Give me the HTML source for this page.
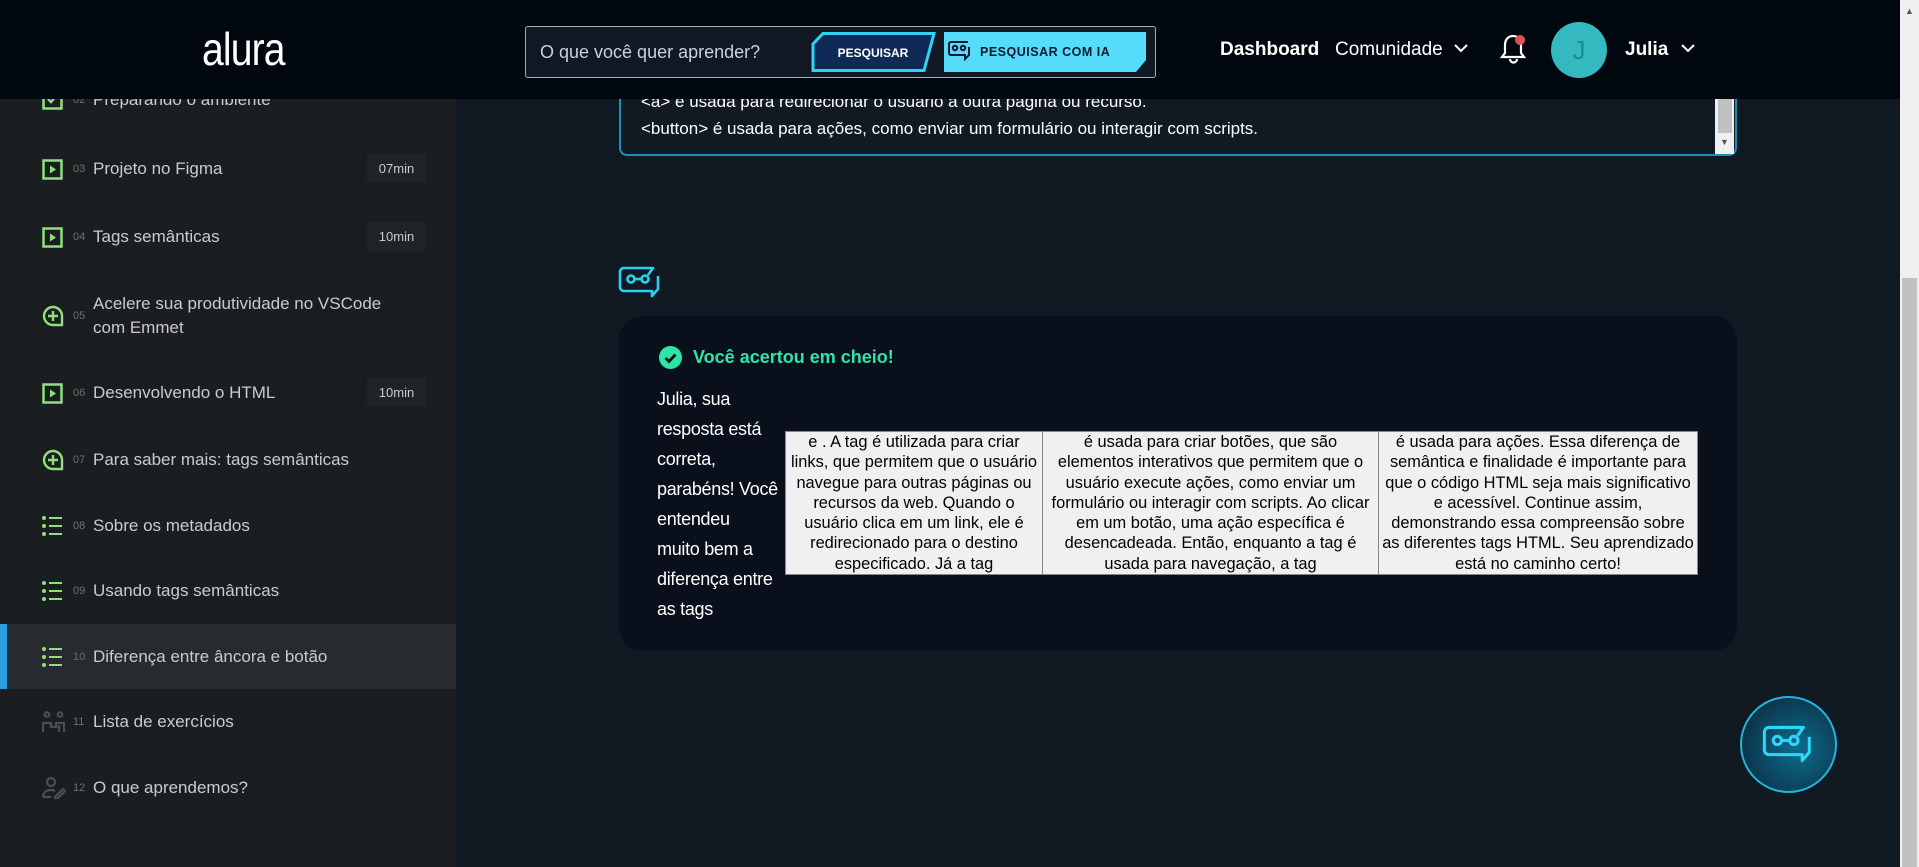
<!DOCTYPE html>
<html><head><meta charset="utf-8"><style>
*{margin:0;padding:0;box-sizing:border-box}
body{width:1919px;height:867px;overflow:hidden;background:#111923;font-family:"Liberation Sans",sans-serif;position:relative;color:#fff}
.abs{position:absolute}
#side{left:0;top:0;width:456px;height:867px;background:#1b1e21}
.it{position:absolute;left:0;width:456px;height:40px;display:flex;align-items:center;color:#c9cbcd;font-size:17px}
.it svg{position:absolute;left:42px}
.it .n{position:absolute;left:73px;font-size:11px;color:#6b7075}
.it .t{position:absolute;left:93px;line-height:24px}
.dur{position:absolute;left:367px;width:59px;height:29px;background:#202427;color:#c9cbcd;font-size:13px;line-height:29px;text-align:center}
#hdr{left:0;top:0;width:1900px;height:99px;background:#01070e}
#sb{left:1900px;top:0;width:19px;height:867px;background:#f0f0f0}
td{background:#f0f0f0;color:#000;border:1px solid #888;text-align:center;font-size:16.4px;line-height:20.3px;padding:0 1px;vertical-align:top}
</style></head><body>
<div id="side" class="abs">
 <div class="it" style="top:80px"><svg width="21" height="22" viewBox="0 0 21 22"><rect x="1.5" y="1.5" width="18" height="18" fill="none" stroke="#8fe07a" stroke-width="2.5"/><path d="M6 10l3 3 5-6" stroke="#8fe07a" stroke-width="2.5" fill="none"/></svg><span class="n">02</span><span class="t">Preparando o ambiente</span></div>
 <div class="it" style="top:149px"><svg width="21" height="21" viewBox="0 0 21 21"><rect x="1.5" y="1.5" width="18" height="18" fill="none" stroke="#8fe07a" stroke-width="2.5"/><path d="M8 6.5v8l6-4z" fill="#8fe07a"/></svg><span class="n">03</span><span class="t">Projeto no Figma</span><span class="dur" style="top:5px">07min</span></div>
 <div class="it" style="top:217px"><svg width="21" height="21" viewBox="0 0 21 21"><rect x="1.5" y="1.5" width="18" height="18" fill="none" stroke="#8fe07a" stroke-width="2.5"/><path d="M8 6.5v8l6-4z" fill="#8fe07a"/></svg><span class="n">04</span><span class="t">Tags semânticas</span><span class="dur" style="top:5px">10min</span></div>
 <div class="it" style="top:296px"><svg width="22" height="22" viewBox="0 0 22 22"><path d="M11 2a9 9 0 1 0 0 18h9v-9a9 9 0 0 0-9-9z" fill="none" stroke="#8fe07a" stroke-width="2.4"/><path d="M11 6v10M6 11h10" stroke="#8fe07a" stroke-width="2.4"/></svg><span class="n">05</span><span class="t">Acelere sua produtividade no VSCode<br>com Emmet</span></div>
 <div class="it" style="top:373px"><svg width="21" height="21" viewBox="0 0 21 21"><rect x="1.5" y="1.5" width="18" height="18" fill="none" stroke="#8fe07a" stroke-width="2.5"/><path d="M8 6.5v8l6-4z" fill="#8fe07a"/></svg><span class="n">06</span><span class="t">Desenvolvendo o HTML</span><span class="dur" style="top:5px">10min</span></div>
 <div class="it" style="top:440px"><svg width="22" height="22" viewBox="0 0 22 22"><path d="M11 2a9 9 0 1 0 0 18h9v-9a9 9 0 0 0-9-9z" fill="none" stroke="#8fe07a" stroke-width="2.4"/><path d="M11 6v10M6 11h10" stroke="#8fe07a" stroke-width="2.4"/></svg><span class="n">07</span><span class="t">Para saber mais: tags semânticas</span></div>
 <div class="it" style="top:506px"><svg width="21" height="20" viewBox="0 0 21 20"><g fill="#8fe07a"><circle cx="2" cy="2" r="2"/><circle cx="2" cy="10" r="2"/><circle cx="2" cy="18" r="2"/><rect x="7" y="1" width="13" height="2"/><rect x="7" y="9" width="13" height="2"/><rect x="7" y="17" width="13" height="2"/></g></svg><span class="n">08</span><span class="t">Sobre os metadados</span></div>
 <div class="it" style="top:571px"><svg width="21" height="20" viewBox="0 0 21 20"><g fill="#8fe07a"><circle cx="2" cy="2" r="2"/><circle cx="2" cy="10" r="2"/><circle cx="2" cy="18" r="2"/><rect x="7" y="1" width="13" height="2"/><rect x="7" y="9" width="13" height="2"/><rect x="7" y="17" width="13" height="2"/></g></svg><span class="n">09</span><span class="t">Usando tags semânticas</span></div>
 <div class="abs" style="left:0;top:624px;width:456px;height:65px;background:#272a2e"></div>
 <div class="abs" style="left:0;top:624px;width:7px;height:65px;background:#2aa0e0"></div>
 <div class="it" style="top:637px"><svg width="21" height="20" viewBox="0 0 21 20"><g fill="#8fe07a"><circle cx="2" cy="2" r="2"/><circle cx="2" cy="10" r="2"/><circle cx="2" cy="18" r="2"/><rect x="7" y="1" width="13" height="2"/><rect x="7" y="9" width="13" height="2"/><rect x="7" y="17" width="13" height="2"/></g></svg><span class="n">10</span><span class="t">Diferença entre âncora e botão</span></div>
 <div class="it" style="top:702px"><svg width="24" height="22" viewBox="0 0 24 22"><g fill="none" stroke="#4a4f55" stroke-width="2.2"><circle cx="5" cy="3.5" r="2.3"/><circle cx="18" cy="3.5" r="2.3"/><path d="M1 21v-9h8v4h5v-4h8v9M17 14v7"/></g></svg><span class="n">11</span><span class="t">Lista de exercícios</span></div>
 <div class="it" style="top:768px"><svg width="24" height="22" viewBox="0 0 24 22"><g fill="none" stroke="#4a4f55" stroke-width="2.2"><circle cx="9" cy="5" r="4"/><path d="M1 20c0-5 4-7 8-7 2 0 3 .4 4 1M1 20h8M13 20l8-8 2 2-8 8h-2z"/></g></svg><span class="n">12</span><span class="t">O que aprendemos?</span></div>
</div>

<div class="abs" style="left:619px;top:60px;width:1118px;height:96px;border:2px solid #1f8fb5;border-top:none;border-radius:0 0 8px 8px;background:#111923"></div>
<div class="abs" style="left:641px;top:88px;font-size:17px;line-height:27px;color:#fff">&lt;a&gt; é usada para redirecionar o usuário a outra página ou recurso.<br>&lt;button&gt; é usada para ações, como enviar um formulário ou interagir com scripts.</div>
<div class="abs" style="left:1715px;top:99px;width:19px;height:55px;background:#f0f0f0"><div style="margin:0 auto;width:14px;height:34px;background:#c1c1c1"></div><div style="color:#555;font-size:9px;text-align:center;margin-top:4px">▼</div></div>

<svg class="abs" style="left:618px;top:266px" width="44" height="32" viewBox="0 0 44 32"><g fill="none" stroke="#2bd0f0" stroke-width="2.6" stroke-linejoin="round"><path d="M5 2h30l-5 7v0M40 10v13l-6 7v-5H6a4 4 0 0 1-4-4V6a4 4 0 0 1 4-4"/><circle cx="13" cy="13" r="3.5"/><circle cx="27" cy="13" r="3.5"/><path d="M16.5 13h7"/></g></svg>

<div class="abs" style="left:619px;top:316px;width:1118px;height:335px;background:#09101b;border-radius:24px"></div>
<svg class="abs" style="left:659px;top:346px" width="23" height="23" viewBox="0 0 23 23"><circle cx="11.5" cy="11.5" r="11.5" fill="#2de6a5"/><path d="M6.5 12l3.5 3.5 6.5-7" stroke="#09101b" stroke-width="2.8" fill="none"/></svg>
<div class="abs" style="left:693px;top:347px;font-size:18px;font-weight:bold;color:#2de6a5">Você acertou em cheio!</div>
<div class="abs" style="left:657px;top:384px;white-space:nowrap;font-size:18px;letter-spacing:-.3px;line-height:30px;color:#fff">Julia, sua<br>resposta está<br>correta,<br>parabéns! Você<br>entendeu<br>muito bem a<br>diferença entre<br>as tags</div>
<table class="abs" style="left:785px;top:431px;width:913px;height:143px;border-collapse:collapse">
<tr><td style="width:257px;padding:0 4px">e . A tag é utilizada para criar links, que permitem que o usuário navegue para outras páginas ou recursos da web. Quando o usuário clica em um link, ele é redirecionado para o destino especificado. Já a tag</td>
<td style="width:336px">é usada para criar botões, que são elementos interativos que permitem que o usuário execute ações, como enviar um formulário ou interagir com scripts. Ao clicar em um botão, uma ação específica é desencadeada. Então, enquanto a tag é usada para navegação, a tag</td>
<td style="padding:0 3px">é usada para ações. Essa diferença de semântica e finalidade é importante para que o código HTML seja mais significativo e acessível. Continue assim, demonstrando essa compreensão sobre as diferentes tags HTML. Seu aprendizado está no caminho certo!</td></tr></table>

<div class="abs" style="left:1740px;top:696px;width:97px;height:97px;border-radius:50%;border:2px solid #22b5d8;background:radial-gradient(circle at 60% 55%,#0d6b8c,#0b3449 75%)"></div>
<svg class="abs" style="left:1762px;top:724px" width="52" height="40" viewBox="0 0 44 32"><g fill="none" stroke="#2bd8f8" stroke-width="2.6" stroke-linejoin="round"><path d="M5 2h30l-5 7M40 10v13l-6 7v-5H6a4 4 0 0 1-4-4V6a4 4 0 0 1 4-4"/><circle cx="13" cy="13" r="3.5"/><circle cx="27" cy="13" r="3.5"/><path d="M16.5 13h7"/></g></svg>

<div id="hdr" class="abs">
 <div class="abs" style="left:202px;top:22px;font-size:46px;color:#fff;letter-spacing:-1px;transform:scaleX(.85);transform-origin:left">alura</div>
 <div class="abs" style="left:525px;top:26px;width:631px;height:52px;border:1.5px solid #9fb0bf;border-radius:3px;background:#111823"></div>
 <div class="abs" style="left:540px;top:42px;font-size:18px;color:#c8d0d8">O que você quer aprender?</div>
 <svg class="abs" style="left:811px;top:32px" width="125" height="40" viewBox="0 0 125 40"><path d="M12 1.5h111l-10 37H2V12z" fill="#0f2a55" stroke="#2fd2f5" stroke-width="3"/><text x="62" y="25" text-anchor="middle" font-family="Liberation Sans" font-weight="bold" font-size="12" fill="#fff">PESQUISAR</text></svg>
 <svg class="abs" style="left:944px;top:32px" width="202" height="40" viewBox="0 0 202 40"><path d="M0 0h202v28l-10 12H0z" fill="#56dcfb"/><g fill="none" stroke="#0b1a2a" stroke-width="2"><path d="M24 10h-17a2 2 0 0 0-2 2v9a2 2 0 0 0 2 2h14v4l4-4v-8"/><circle cx="11" cy="16" r="2.2"/><circle cx="19" cy="16" r="2.2"/></g><text x="36" y="24" font-family="Liberation Sans" font-weight="bold" font-size="12.5" fill="#0b1a2a" letter-spacing=".5">PESQUISAR COM IA</text></svg>
 <div class="abs" style="left:1220px;top:39px;font-size:19px;font-weight:bold;color:#fff">Dashboard</div>
 <div class="abs" style="left:1335px;top:39px;font-size:19px;color:#fff">Comunidade</div>
 <svg class="abs" style="left:1454px;top:44px" width="14" height="10"><path d="M1 1l6 6 6-6" stroke="#fff" stroke-width="2" fill="none"/></svg>
 <svg class="abs" style="left:1498px;top:32px" width="32" height="34" viewBox="0 0 32 34"><path d="M15 4c-5 0-8 4-8 9v8l-3 4h22l-3-4v-8c0-5-3-9-8-9zM12 27a3.5 3.5 0 0 0 7 0" fill="none" stroke="#fff" stroke-width="2.2"/><circle cx="22" cy="8" r="5" fill="#e0524f"/></svg>
 <div class="abs" style="left:1551px;top:22px;width:56px;height:56px;border-radius:50%;background:#33b9bf;color:#1e8b8f;font-size:26px;text-align:center;line-height:56px">J</div>
 <div class="abs" style="left:1625px;top:39px;font-size:19px;font-weight:bold;color:#fff">Julia</div>
 <svg class="abs" style="left:1681px;top:44px" width="14" height="10"><path d="M1 1l6 6 6-6" stroke="#fff" stroke-width="2" fill="none"/></svg>
</div>
<div id="sb" class="abs"><div style="font-size:9px;color:#555;text-align:center;margin-top:6px">▲</div><div class="abs" style="left:2px;top:278px;width:15px;height:589px;background:#c1c1c1"></div></div>
</body></html>
